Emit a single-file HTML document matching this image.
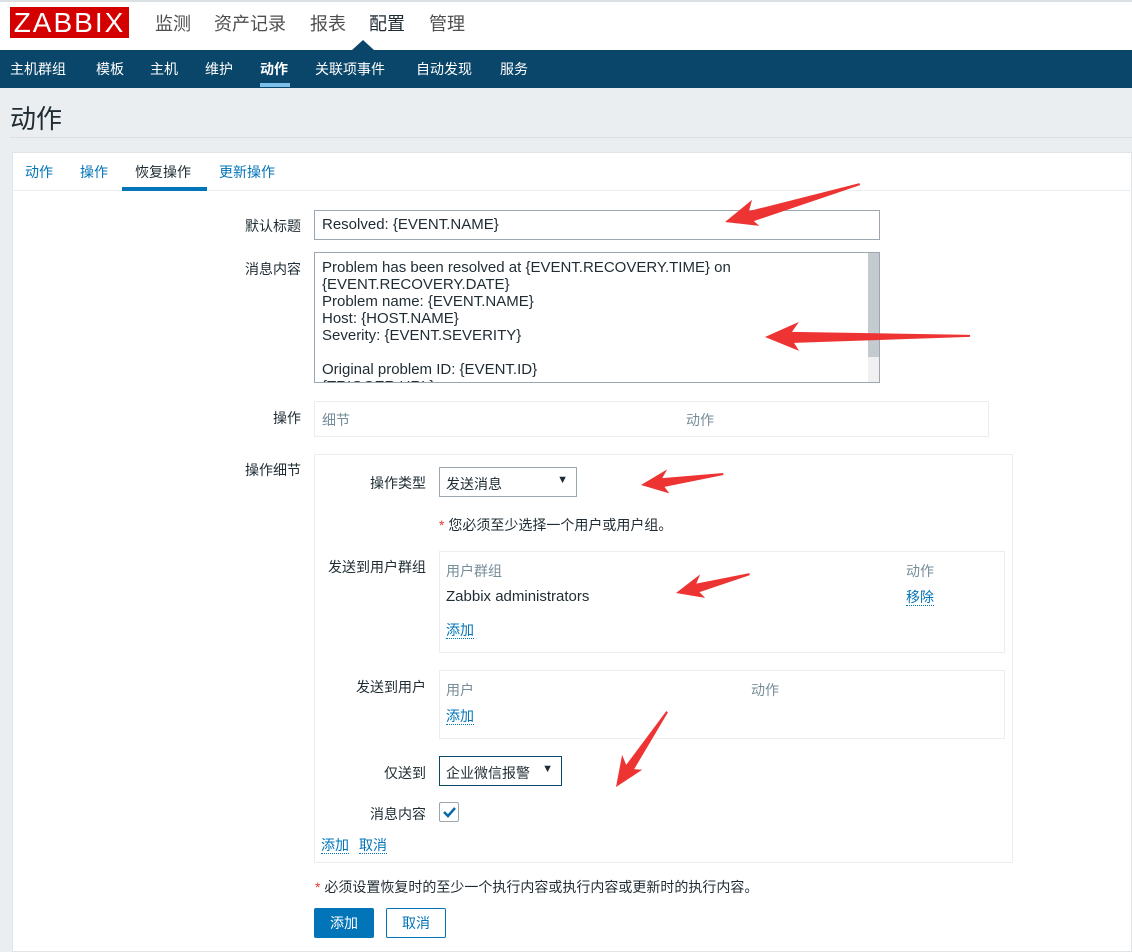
<!DOCTYPE html>
<html><head><meta charset="utf-8"><style>
*{margin:0;padding:0;box-sizing:border-box}
body{width:1132px;height:945px;overflow:hidden;background:#ebeef0;font-family:"Liberation Sans","Noto Sans CJK SC",sans-serif;font-size:14px;color:#1f2c33;position:relative}
.a{position:absolute;white-space:nowrap}
.lbl{position:absolute;text-align:right;white-space:nowrap}
.box{position:absolute;border:1px solid #ebeef0;background:#fff}
.gray{color:#768d99}
.lnk{color:#0275b8;border-bottom:1px dotted #0275b8;line-height:16px}
.en{font-size:15px}
</style></head><body>
<div class="a" style="left:0;top:0;width:1132px;height:50px;background:#fff;border-top:2px solid #dde0e3"></div>
<div class="a" style="left:10px;top:7px;width:119px;height:31px;background:#d40000;color:#fff;font-size:28px;line-height:31px;text-align:center;letter-spacing:2px">ZABBIX</div>
<div class="a" style="left:155px;top:10px;font-size:18px;color:#4f4f4f">监测</div>
<div class="a" style="left:214px;top:10px;font-size:18px;color:#4f4f4f">资产记录</div>
<div class="a" style="left:310px;top:10px;font-size:18px;color:#4f4f4f">报表</div>
<div class="a" style="left:369px;top:10px;font-size:18px;color:#1f2c33">配置</div>
<div class="a" style="left:429px;top:10px;font-size:18px;color:#4f4f4f">管理</div>
<div class="a" style="left:0;top:50px;width:1132px;height:38px;background:#0a466a"></div>
<div class="a" style="left:352px;top:40px;width:0;height:0;border-left:11px solid transparent;border-right:11px solid transparent;border-bottom:10px solid #0a466a"></div>
<div class="a" style="top:59px;left:10px;color:#fff;font-size:14px">主机群组</div>
<div class="a" style="top:59px;left:96px;color:#fff">模板</div>
<div class="a" style="top:59px;left:150px;color:#fff">主机</div>
<div class="a" style="top:59px;left:205px;color:#fff">维护</div>
<div class="a" style="top:59px;left:260px;color:#fff;font-weight:bold">动作</div>
<div class="a" style="top:83px;left:260px;width:30px;height:4px;background:#7cc0ea"></div>
<div class="a" style="top:59px;left:315px;color:#fff">关联项事件</div>
<div class="a" style="top:59px;left:416px;color:#fff">自动发现</div>
<div class="a" style="top:59px;left:500px;color:#fff">服务</div>
<div class="a" style="left:10px;top:99px;font-size:26px;color:#1f2c33">动作</div>
<div class="a" style="left:10px;top:137px;width:1122px;height:1px;background:#dde1e4"></div>
<div class="a" style="left:12px;top:152px;width:1120px;height:800px;background:#fff;border:1px solid #dfe4e7"></div>
<div class="a" style="left:12px;top:190px;width:1120px;height:1px;background:#ebeef0"></div>
<div class="a" style="left:25px;top:162px;color:#0275b8">动作</div>
<div class="a" style="left:80px;top:162px;color:#0275b8">操作</div>
<div class="a" style="left:135px;top:162px;color:#1f2c33">恢复操作</div>
<div class="a" style="left:122px;top:187px;width:85px;height:4px;background:#0275b8"></div>
<div class="a" style="left:219px;top:162px;color:#0275b8">更新操作</div>

<div class="lbl" style="right:831px;top:216px">默认标题</div>
<div class="a en" style="left:314px;top:210px;width:566px;height:30px;border:1px solid #9aa7b0;padding:5px 7px">Resolved: {EVENT.NAME}</div>
<div class="lbl" style="right:831px;top:259px">消息内容</div>
<div class="a en" style="left:314px;top:252px;width:566px;height:131px;border:1px solid #9aa7b0;padding:6px 7px;line-height:17px;overflow:hidden">Problem has been resolved at {EVENT.RECOVERY.TIME} on<br>{EVENT.RECOVERY.DATE}<br>Problem name: {EVENT.NAME}<br>Host: {HOST.NAME}<br>Severity: {EVENT.SEVERITY}<br><br>Original problem ID: {EVENT.ID}<br>{TRIGGER.URL}</div>
<div class="a" style="left:868px;top:253px;width:11px;height:129px;background:#f0f0f0"></div>
<div class="a" style="left:868px;top:253px;width:11px;height:104px;background:#c3cbd1"></div>

<div class="lbl" style="right:831px;top:408px">操作</div>
<div class="box" style="left:314px;top:401px;width:675px;height:36px"></div>
<div class="a gray" style="left:322px;top:410px">细节</div>
<div class="a gray" style="left:686px;top:410px">动作</div>

<div class="lbl" style="right:831px;top:460px">操作细节</div>
<div class="box" style="left:314px;top:454px;width:699px;height:409px"></div>
<div class="lbl" style="right:706px;top:473px">操作类型</div>
<div class="a" style="left:439px;top:467px;width:138px;height:30px;border:1px solid #9aa7b0;padding:6px 6px">发送消息<span style="position:absolute;right:8px;top:6px;font-size:11px">▼</span></div>
<div class="a" style="left:439px;top:515px"><span style="color:#e33734">*</span> 您必须至少选择一个用户或用户组。</div>
<div class="lbl" style="right:706px;top:557px">发送到用户群组</div>
<div class="box" style="left:439px;top:551px;width:566px;height:102px"></div>
<div class="a gray" style="left:446px;top:561px">用户群组</div>
<div class="a gray" style="left:906px;top:561px">动作</div>
<div class="a en" style="left:446px;top:588px">Zabbix administrators</div>
<div class="a lnk" style="left:906px;top:589px">移除</div>
<div class="a lnk" style="left:446px;top:622px">添加</div>
<div class="lbl" style="right:706px;top:677px">发送到用户</div>
<div class="box" style="left:439px;top:670px;width:566px;height:69px"></div>
<div class="a gray" style="left:446px;top:680px">用户</div>
<div class="a gray" style="left:751px;top:680px">动作</div>
<div class="a lnk" style="left:446px;top:708px">添加</div>
<div class="lbl" style="right:706px;top:763px">仅送到</div>
<div class="a" style="left:439px;top:756px;width:123px;height:30px;border:1px solid #0a466a;padding:6px 6px">企业微信报警<span style="position:absolute;right:8px;top:6px;font-size:11px">▼</span></div>
<div class="lbl" style="right:706px;top:804px">消息内容</div>
<div class="a" style="left:439px;top:802px;width:20px;height:20px;border:1px solid #9aa7b0;border-radius:2px"><svg width="18" height="18" viewBox="0 0 18 18" style="position:absolute;left:0;top:0"><path d="M4 9 L8 13 L15 5" stroke="#0a6aa8" stroke-width="2.5" fill="none"/></svg></div>
<div class="a lnk" style="left:321px;top:837px">添加</div>
<div class="a lnk" style="left:359px;top:837px">取消</div>

<div class="a" style="left:315px;top:877px"><span style="color:#e33734">*</span> 必须设置恢复时的至少一个执行内容或执行内容或更新时的执行内容。</div>
<div class="a" style="left:314px;top:908px;width:60px;height:30px;background:#0275b8;border-radius:2px;color:#fff;text-align:center;line-height:30px">添加</div>
<div class="a" style="left:386px;top:908px;width:60px;height:30px;border:1px solid #0275b8;border-radius:2px;color:#0275b8;text-align:center;line-height:28px">取消</div>

<svg class="a" style="left:0;top:0" width="1132" height="945">
<g fill="#ee3333">
<polygon transform="translate(725,222) rotate(-15.7)" points="0,0 32,-14 26,-4 140,-1 140,1 28,7 32,13"/>
<polygon transform="translate(765,337) rotate(-0.3)" points="0,0 34,-15 27,-5 205,-1 205,1 29,6 34,14"/>
<polygon transform="translate(641,485) rotate(-7.6)" points="0,0 28,-12 22,-4 83,-1 83,1 23,5 27,12"/>
<polygon transform="translate(676,593) rotate(-14.4)" points="0,0 28,-12 22,-4 76,-1 76,1 23,5 27,12"/>
<polygon transform="translate(616,787) rotate(-55.8)" points="0,0 30,-13 24,-4 91,-1 91,1 25,5 29,12"/>
</g></svg>
</body></html>
